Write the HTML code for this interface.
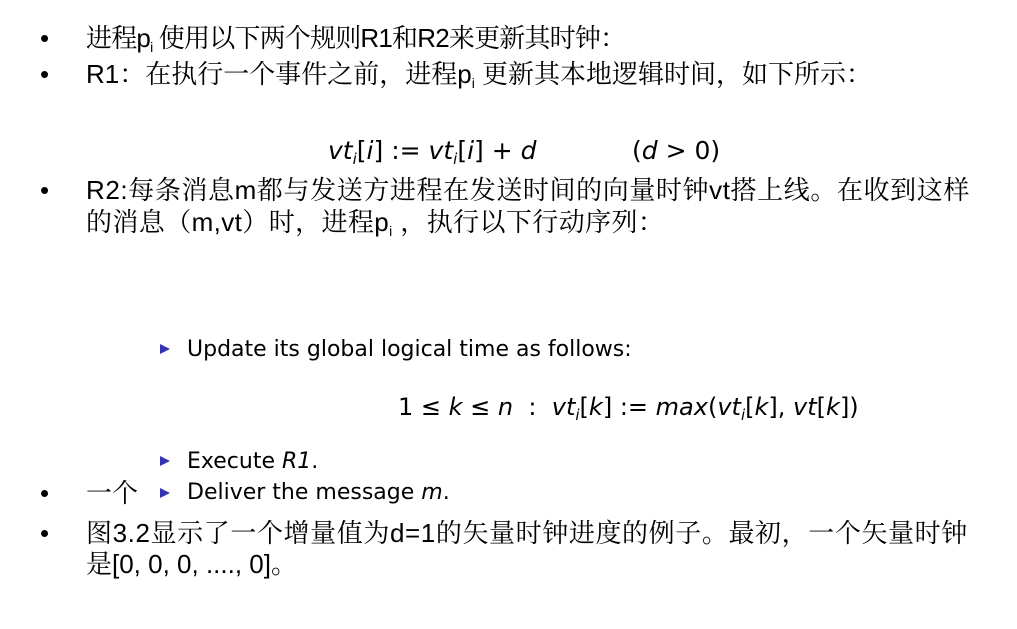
<!DOCTYPE html>
<html><head><meta charset="utf-8"><style>
body{margin:0;width:1017px;height:629px;background:#fff;overflow:hidden;position:relative;font-family:"Liberation Sans","Noto Serif CJK SC",serif;color:#000}
.l{position:absolute;font-size:26px;line-height:30px;white-space:nowrap}
.b{position:absolute;left:40px;font-size:26px;line-height:30px}
sub{font-size:14px;vertical-align:-5px;line-height:0}
.m{position:absolute;font-family:"DejaVu Sans","Liberation Sans",sans-serif;font-size:25px;line-height:30px;white-space:nowrap}
.s{position:absolute;font-family:"DejaVu Sans","Liberation Sans",sans-serif;font-size:22px;line-height:30px;white-space:nowrap}
i{font-style:italic}
.t{position:absolute;width:0;height:0;border-top:5px solid transparent;border-bottom:5px solid transparent;border-left:10px solid #3333b3}
.mi sub{font-size:15px}
</style></head><body>
<div class="b" style="top:23px">•</div>
<div class="l" style="left:86px;top:23px;letter-spacing:-0.8px">进程p<sub>i</sub> 使用以下两个规则R1和R2来更新其时钟：</div>
<div class="b" style="top:59px">•</div>
<div class="l" style="left:86px;top:59px">R1：在执行一个事件之前，进程p<sub>i</sub> 更新其本地逻辑时间，如下所示：</div>
<div class="m mi" style="left:328px;top:136px"><i>vt</i><sub><i>i</i></sub>[<i>i</i>] := <i>vt</i><sub><i>i</i></sub>[<i>i</i>] + <i>d</i></div>
<div class="m" style="left:632px;top:136px">(<i>d</i> &gt; 0)</div>
<div class="b" style="top:175px">•</div>
<div class="l" style="left:86px;top:175px;letter-spacing:0.6px">R2:每条消息m都与发送方进程在发送时间的向量时钟vt搭上线。在收到这样</div>
<div class="l" style="left:86px;top:207px;letter-spacing:0.4px">的消息（m,vt）时，进程p<sub>i</sub> ，执行以下行动序列：</div>
<div class="t" style="left:160px;top:344px"></div>
<div class="s" style="left:187px;top:335px">Update its global logical time as follows:</div>
<div class="m mi" style="left:398px;top:392px;font-size:24px">1 ≤ <i>k</i> ≤ <i>n</i> &nbsp;: &nbsp;<i>vt</i><sub><i>i</i></sub>[<i>k</i>] := <i>max</i>(<i>vt</i><sub><i>i</i></sub>[<i>k</i>], <i>vt</i>[<i>k</i>])</div>
<div class="t" style="left:160px;top:456px"></div>
<div class="s" style="left:187px;top:447px">Execute <i>R1</i>.</div>
<div class="b" style="top:478px">•</div>
<div class="l" style="left:86px;top:478px">一个</div>
<div class="t" style="left:160px;top:488px"></div>
<div class="s" style="left:187px;top:478px">Deliver the message <i>m</i>.</div>
<div class="b" style="top:518px">•</div>
<div class="l" style="left:86px;top:518px;letter-spacing:0.6px">图3.2显示了一个增量值为d=1的矢量时钟进度的例子。最初，一个矢量时钟</div>
<div class="l" style="left:86px;top:549px">是[0, 0, 0, ...., 0]。</div>
</body></html>
